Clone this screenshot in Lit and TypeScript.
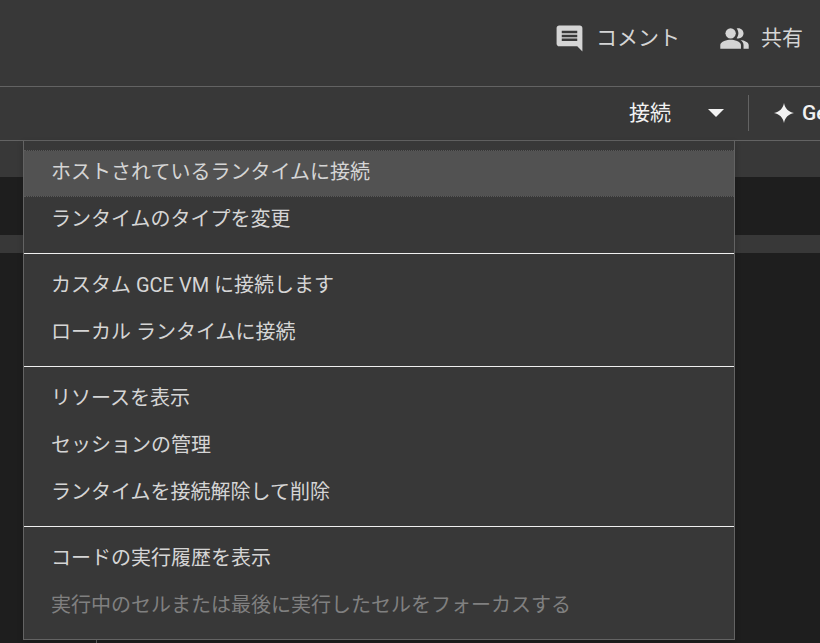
import { LitElement, html, css, svg } from "lit";
import { customElement, state } from "lit/decorators.js";
import { classMap } from "lit/directives/class-map.js";

interface Item {
  label: string;
  disabled?: boolean;
}

const GROUPS: Item[][] = [
  [{ label: "ホストされているランタイムに接続" }, { label: "ランタイムのタイプを変更" }],
  [{ label: "カスタム GCE VM に接続します" }, { label: "ローカル ランタイムに接続" }],
  [
    { label: "リソースを表示" },
    { label: "セッションの管理" },
    { label: "ランタイムを接続解除して削除" },
  ],
  [
    { label: "コードの実行履歴を表示" },
    { label: "実行中のセルまたは最後に実行したセルをフォーカスする", disabled: true },
  ],
];

const commentShape = svg`<path d="M21.99 4c0-1.1-.89-2-1.99-2H4c-1.1 0-2 .9-2 2v12c0 1.1.9 2 2 2h14l4 4-.01-18zM18 14H6v-2h12v2zm0-3H6V9h12v2zm0-3H6V6h12v2z"/>`;
const peopleShape = svg`
  <circle cx="9" cy="8" r="4"/>
  <path d="M9 13c-2.67 0-8 1.34-8 4v3h16v-3c0-2.66-5.33-4-8-4z"/>
  <path d="M16.67 13.13C18.04 14.06 19 15.32 19 17v3h4v-3c0-2.18-3.57-3.47-6.33-3.87z"/>
  <path d="M15 12c2.21 0 4-1.79 4-4s-1.79-4-4-4c-.47 0-.91.1-1.33.24C14.5 5.27 15 6.58 15 8s-.5 2.73-1.33 3.76c.42.14.86.24 1.33.24z"/>`;

@customElement("runtime-menu")
export class RuntimeMenu extends LitElement {
  @state() private active = GROUPS[0][0].label;

  static styles = css`
    :host {
      display: block;
      background: #383838;
      border: 1px solid #636363;
      border-top: 0;
      box-shadow: 0 2px 6px rgba(0, 0, 0, 0.2);
    }
    .group {
      padding: 9px 0;
    }
    .group + .group {
      border-top: 1px solid #f0f0f0;
    }
    .item {
      display: block;
      box-sizing: border-box;
      width: 100%;
      height: 47px;
      margin: 0;
      padding: 0 27px 4px;
      border: 1px dotted transparent;
      border-width: 1px 0;
      background: none;
      background-clip: padding-box;
      color: #d5d5d5;
      font: inherit;
      font-size: 20px;
      line-height: 24px;
      text-align: left;
      white-space: nowrap;
      overflow: hidden;
    }
    .active {
      background-color: #525252;
      border-color: #5a5a5a;
    }
    .item:disabled {
      color: #808080;
    }
  `;

  render() {
    return html`<div role="menu">
      ${GROUPS.map(
        (group) => html`<div class="group" role="group">
          ${group.map(
            (item) => html`<button
              class=${classMap({ item: true, active: item.label === this.active })}
              role="menuitem"
              ?disabled=${item.disabled ?? false}
              @mouseenter=${() => (this.active = item.label)}
            >${item.label}</button>`
          )}
        </div>`
      )}
    </div>`;
  }
}

@customElement("app-root")
export class AppRoot extends LitElement {
  static styles = css`
    :host {
      display: flex;
      flex-direction: column;
      position: relative;
      min-height: 100vh;
      overflow: hidden;
      background: #1e1e1e;
      color: #d5d5d5;
      font-family: Roboto, "Noto Sans CJK JP", sans-serif;
    }
    button {
      display: flex;
      align-items: center;
      margin: 0;
      padding: 0;
      border: 0;
      background: none;
      color: inherit;
      font: inherit;
      font-size: 21px;
      line-height: 24px;
      white-space: nowrap;
    }
    svg {
      display: block;
      flex: none;
      fill: currentColor;
    }
    .header,
    .toolbar {
      display: flex;
      justify-content: flex-end;
      align-items: center;
      background: #383838;
      border-bottom: 1px solid #636363;
    }
    .header {
      gap: 39px;
      height: 76px;
      padding: 0 17px 10px 0;
    }
    .header button {
      gap: 11px;
    }
    .icon {
      width: 31px;
      height: 31px;
    }
    .toolbar {
      height: 51px;
      padding-bottom: 2px;
      color: #f2f2f2;
    }
    .connect {
      margin-right: 37px;
    }
    .arrow {
      width: 16px;
      height: 8px;
    }
    .more {
      margin-right: 24px;
    }
    .divider {
      width: 1px;
      height: 36px;
      background: #636363;
    }
    .gemini {
      gap: 8px;
      width: 46px;
      margin-left: 25px;
      overflow: hidden;
      font-weight: 500;
    }
    .star {
      width: 20px;
      height: 20px;
    }
    .bar {
      height: 36px;
      background: #383838;
    }
    .cell {
      height: 58px;
    }
    .gap {
      height: 18px;
      background: #383838;
    }
    .editor {
      flex: 1;
      margin-left: 96px;
      border-left: 1px solid #636363;
    }
    .notebook {
      display: flex;
      flex: 1;
      flex-direction: column;
      position: relative;
    }
    .menu {
      position: absolute;
      top: 0;
      left: 23px;
      right: 85px;
    }
  `;

  render() {
    return html`
      <header class="header">
        <button><svg class="icon" viewBox="0 0 24 24">${commentShape}</svg>コメント</button>
        <button><svg class="icon" viewBox="0 0 24 24">${peopleShape}</svg>共有</button>
      </header>
      <nav class="toolbar">
        <button class="connect">接続</button>
        <button class="more" aria-label="接続オプション" aria-expanded="true">
          <svg class="arrow" viewBox="0 0 16 8"><path d="M0 0h16L8 8z"/></svg>
        </button>
        <span class="divider"></span>
        <button class="gemini">
          <svg class="star" viewBox="0 0 20 20"><path d="M10 0C11 5.500 14.500 9 20 10C14.500 11 11 14.500 10 20C9 14.500 5.500 11 0 10C5.500 9 9 5.500 10 0z"/></svg>Gemini
        </button>
      </nav>
      <main class="notebook">
        <div class="bar"></div>
        <div class="cell"></div>
        <div class="gap"></div>
        <div class="editor"></div>
        <runtime-menu class="menu"></runtime-menu>
      </main>
    `;
  }
}
